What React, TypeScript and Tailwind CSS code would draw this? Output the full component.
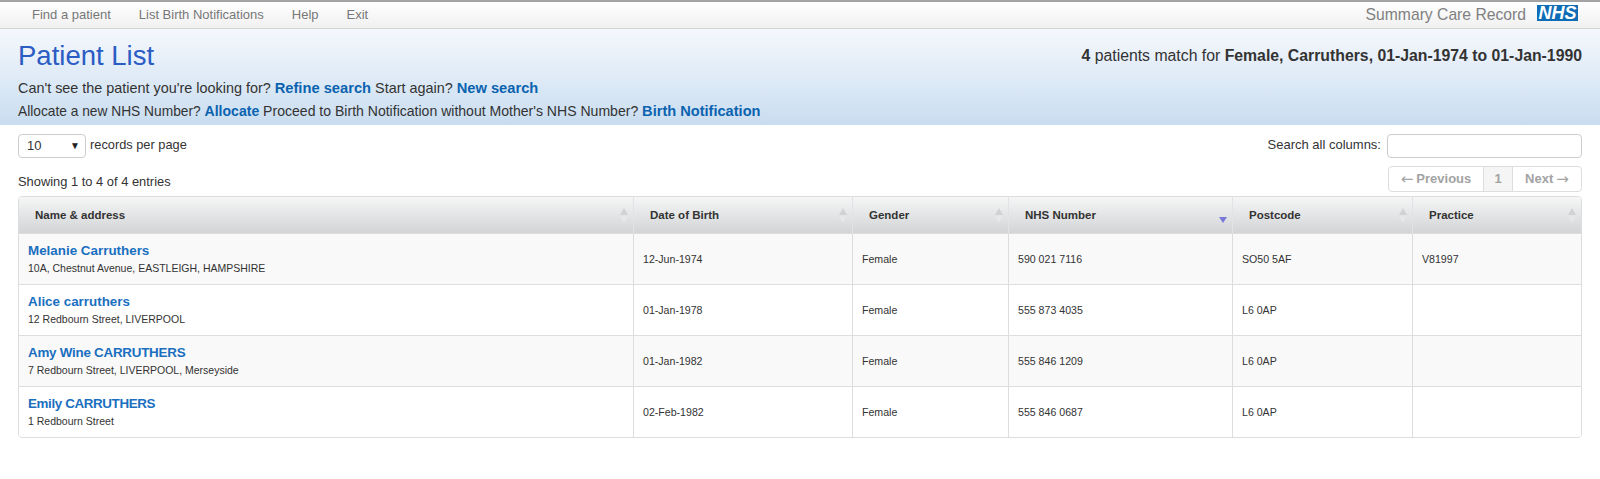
const patients = [
    { name: 'Melanie Carruthers', nameClass: '', address: '10A, Chestnut Avenue, EASTLEIGH, HAMPSHIRE', dob: '12-Jun-1974', gender: 'Female', nhs: '590 021 7116', postcode: 'SO50 5AF', practice: 'V81997' },
    { name: 'Alice carruthers', nameClass: '', address: '12 Redbourn Street, LIVERPOOL', dob: '01-Jan-1978', gender: 'Female', nhs: '555 873 4035', postcode: 'L6 0AP', practice: '' },
    { name: 'Amy Wine CARRUTHERS', nameClass: 'tracking-[-0.25px]', address: '7 Redbourn Street, LIVERPOOL, Merseyside', dob: '01-Jan-1982', gender: 'Female', nhs: '555 846 1209', postcode: 'L6 0AP', practice: '' },
    { name: 'Emily CARRUTHERS', nameClass: 'tracking-[-0.38px]', address: '1 Redbourn Street', dob: '02-Feb-1982', gender: 'Female', nhs: '555 846 0687', postcode: 'L6 0AP', practice: '' },
];

const columns = [
    { label: 'Name & address', width: 'w-[614px]' },
    { label: 'Date of Birth', width: 'w-[219px]' },
    { label: 'Gender', width: 'w-[156px]' },
    { label: 'NHS Number', width: 'w-[224px]', sorted: true },
    { label: 'Postcode', width: 'w-[180px]' },
    { label: 'Practice', width: 'w-[169px]' },
];

function SortArrows({ sorted }: { sorted?: boolean }) {
    if (sorted) {
        return (
            <svg width="8" height="6" viewBox="0 0 8 6" className="absolute right-[5px] bottom-[10px]">
                <path d="M0 0H8L4 6Z" fill="#7a78d8" />
            </svg>
        );
    }
    return (
        <svg width="8" height="15" viewBox="0 0 8 15" className="absolute right-[5px] top-[11px]">
            <path d="M4 0L8 7H0Z" fill="#d0d2d3" />
            <path d="M0 8H8L4 15Z" fill="#e6e7e8" />
        </svg>
    );
}

export default function App() {
    return (
        <div className="min-h-[479px] bg-white text-[#333] font-['Liberation_Sans',Arial,sans-serif]">
            <div className="flex h-[29px] items-center justify-between border-t-2 border-b border-t-[#a3a3a3] border-b-[#d4d4d4] bg-gradient-to-b from-white to-[#f0f0f0] pr-[22px] pl-[32px] text-[13px] text-[#777]">
                <div className="mb-[1px] flex gap-[28px]">
                    <span>Find a patient</span>
                    <span>List Birth Notifications</span>
                    <span>Help</span>
                    <span>Exit</span>
                </div>
                <div className="flex items-center gap-[11px]">
                    <span className="mb-[1px] text-[15.7px] text-[#808080]">Summary Care Record</span>
                    <span className="mb-[3px] flex h-[16px] w-[41px] items-center justify-center bg-[#0f6cb6] text-[18px] leading-none font-bold italic text-white">NHS</span>
                </div>
            </div>

            <div className="h-[96px] bg-gradient-to-b from-[#f5f8fd] to-[#c9ddf0] pr-[18px] pl-[18px]">
                <div className="flex items-center justify-between pt-[10px]">
                    <h1 className="text-[27.5px] leading-[34px] text-[#2a5cc4]">Patient List</h1>
                    <p className="text-[15.8px] text-[#333]">
                        <b>4</b> patients match for <b>Female, Carruthers, 01-Jan-1974 to 01-Jan-1990</b>
                    </p>
                </div>
                <p className="mt-[4px] text-[14.4px] leading-[23px]">
                    Can't see the patient you're looking for? <a className="text-[14.7px] font-bold text-[#0b63b0]">Refine search</a> Start again? <a className="text-[14.7px] font-bold text-[#0b63b0]">New search</a>
                </p>
                <p className="text-[14.05px] leading-[22px]">
                    <span className="text-[13.75px]">Allocate a new NHS Number?</span> <a className="font-bold text-[#0b63b0]">Allocate</a> Proceed to Birth Notification without Mother's NHS Number? <a className="text-[14.6px] font-bold text-[#0b63b0]">Birth Notification</a>
                </p>
            </div>

            <div className="pr-[18px] pl-[18px]">
                <div className="flex h-[41px] items-start justify-between pt-[9px] text-[13px]">
                    <div className="flex items-center gap-[4px]">
                        <div className="flex h-[24px] w-[68px] items-center justify-between rounded-[4px] border border-[#ccc] pr-[5px] pl-[8px]">
                            <span>10</span>
                            <span className="mb-[2px] text-[10px] text-[#222]">▼</span>
                        </div>
                        <span className="mb-[2px] text-[12.8px]">records per page</span>
                    </div>
                    <div className="flex items-center gap-[6px]">
                        <span className="mb-[2px]">Search all columns:</span>
                        <input className="h-[24px] w-[195px] rounded-[4px] border border-[#ccc] bg-white" />
                    </div>
                </div>
                <div className="flex h-[30px] items-start justify-between text-[13px]">
                    <span className="mt-[6px] text-[12.9px] leading-[20px]">Showing 1 to 4 of 4 entries</span>
                    <div className="flex h-[26px] items-stretch rounded-[4px] border border-[#ddd] font-bold text-[#a3a3a3]">
                        <span className="flex w-[94px] items-center justify-center gap-[3px]">
                            <span className="font-['DejaVu_Sans',sans-serif] text-[15px] font-normal">←</span>
                            Previous
                        </span>
                        <span className="flex w-[30px] items-center justify-center border-x border-[#ddd] bg-[#f5f5f5]">1</span>
                        <span className="flex w-[68px] items-center justify-center gap-[3px]">
                            Next
                            <span className="font-['DejaVu_Sans',sans-serif] text-[15px] font-normal">→</span>
                        </span>
                    </div>
                </div>
                <div className="overflow-hidden rounded-[4px] border border-[#ddd]">
                    <table className="w-full table-fixed border-separate border-spacing-0">
                        <thead>
                            <tr className="bg-gradient-to-b from-[#f5f6f6] to-[#d2d4d6]">
                                {columns.map(col => (
                                    <th key={col.label} className={`relative h-[36px] border-l border-[#e2e3e4] pt-[1px] pr-[8px] pl-[16px] text-left text-[11.5px] font-bold text-[#333] first:border-l-0 ${col.width}`}>
                                        {col.label}
                                        <SortArrows sorted={col.sorted} />
                                    </th>
                                ))}
                            </tr>
                        </thead>
                        <tbody>
                            {patients.map((p, i) => (
                                <tr key={p.nhs} className={i % 2 === 0 ? 'bg-[#f9f9f9]' : 'bg-white'}>
                                    <td className="h-[51px] border-t border-[#ddd] px-[9px] align-middle">
                                        <a className={`block text-[13.4px] font-bold leading-[18px] text-[#1a6fc0] ${p.nameClass}`}>{p.name}</a>
                                        <span className="block text-[10.5px] leading-[17px] text-[#333]">{p.address}</span>
                                    </td>
                                    <td className="border-t border-l border-[#ddd] px-[9px] pt-[2px] text-[10.6px] text-[#333]">{p.dob}</td>
                                    <td className="border-t border-l border-[#ddd] px-[9px] pt-[2px] text-[10.6px] text-[#333]">{p.gender}</td>
                                    <td className="border-t border-l border-[#ddd] px-[9px] pt-[2px] text-[10.6px] text-[#333]">{p.nhs}</td>
                                    <td className="border-t border-l border-[#ddd] px-[9px] pt-[2px] text-[10.6px] text-[#333]">{p.postcode}</td>
                                    <td className="border-t border-l border-[#ddd] px-[9px] pt-[2px] text-[10.6px] text-[#333]">{p.practice}</td>
                                </tr>
                            ))}
                        </tbody>
                    </table>
                </div>
            </div>
        </div>
    );
}
